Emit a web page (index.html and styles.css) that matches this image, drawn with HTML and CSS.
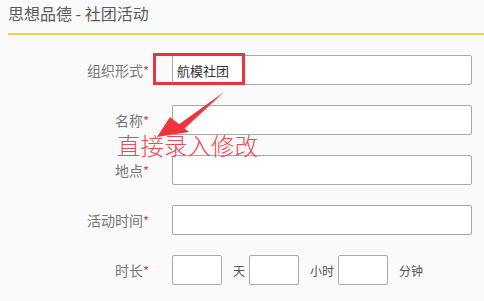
FILE: index.html
```html
<!DOCTYPE html>
<html lang="zh-CN">
<head>
    <meta charset="UTF-8">
    <title>思想品德 - 社团活动</title>
    <link rel="stylesheet" href="styles.css">
</head>
<body>
    <div class="page">
        <div class="page-title">思想品德 - 社团活动</div>

        <form class="form">
            <div class="form-row">
                <label class="form-label">组织形式<span class="req">*</span></label>
                <input class="text-input" type="text" value="航模社团">
            </div>
            <div class="form-row">
                <label class="form-label">名称<span class="req">*</span></label>
                <input class="text-input" type="text">
            </div>
            <div class="form-row">
                <label class="form-label">地点<span class="req">*</span></label>
                <input class="text-input" type="text">
            </div>
            <div class="form-row">
                <label class="form-label">活动时间<span class="req">*</span></label>
                <input class="text-input" type="text">
            </div>
            <div class="form-row">
                <label class="form-label">时长<span class="req">*</span></label>
                <input class="text-input small" type="text">
                <span class="unit">天</span>
                <input class="text-input small" type="text">
                <span class="unit">小时</span>
                <input class="text-input small" type="text">
                <span class="unit">分钟</span>
            </div>
        </form>

        <!-- annotation layer -->
        <div class="mark-box"></div>
        <svg class="mark-arrow" width="70" height="50" viewBox="0 0 70 50">
            <path d="M69 1 L23 34 L28 39 Z" fill="#f0343c"/>
            <path d="M2 46 L15 26 L34 41 Z" fill="#f0343c"/>
        </svg>
        <div class="mark-text">直接录入修改</div>
    </div>
</body>
</html>
```

FILE: styles.css
```css
body {
    margin: 0;
    background-color: #fafafa;
    font-family: "Noto Sans CJK SC", "Noto Sans", sans-serif;
}

.page {
    position: relative;
    padding: 0 0 0 8px;
}

.page-title {
    height: 33px;
    line-height: 27px;
    font-size: 16px;
    color: #5a5a5a;
    border-bottom: 2px solid #f0d24a;
}

.form {
    padding-top: 20px;
    margin-left: -8px;
}

.form-row {
    display: flex;
    align-items: center;
    height: 30px;
    margin-bottom: 20px;
}

.form-label {
    width: 149px;
    text-align: right;
    margin-right: 23px;
    font-size: 14px;
    line-height: 18px;
    color: #777;
}

.req {
    font-size: 13px;
    color: #e0404e;
}

.text-input {
    box-sizing: border-box;
    width: 300px;
    height: 30px;
    margin: 0;
    padding: 0 4px;
    border: 1px solid #a8a8a8;
    border-radius: 2px;
    background: #fff;
    font-family: inherit;
    font-size: 13px;
    color: #333;
}

.text-input.small {
    width: 50px;
}

.unit {
    margin: 0 4px 0 11px;
    font-size: 12px;
    color: #555;
}

.mark-box {
    position: absolute;
    left: 153px;
    top: 53px;
    width: 86px;
    height: 26px;
    border: 3px solid #e8343a;
}

.mark-arrow {
    position: absolute;
    left: 155px;
    top: 91px;
}

.mark-text {
    position: absolute;
    left: 117px;
    top: 133px;
    font-size: 23.5px;
    line-height: 24px;
    font-weight: 300;
    color: #ea4a56;
}
```
